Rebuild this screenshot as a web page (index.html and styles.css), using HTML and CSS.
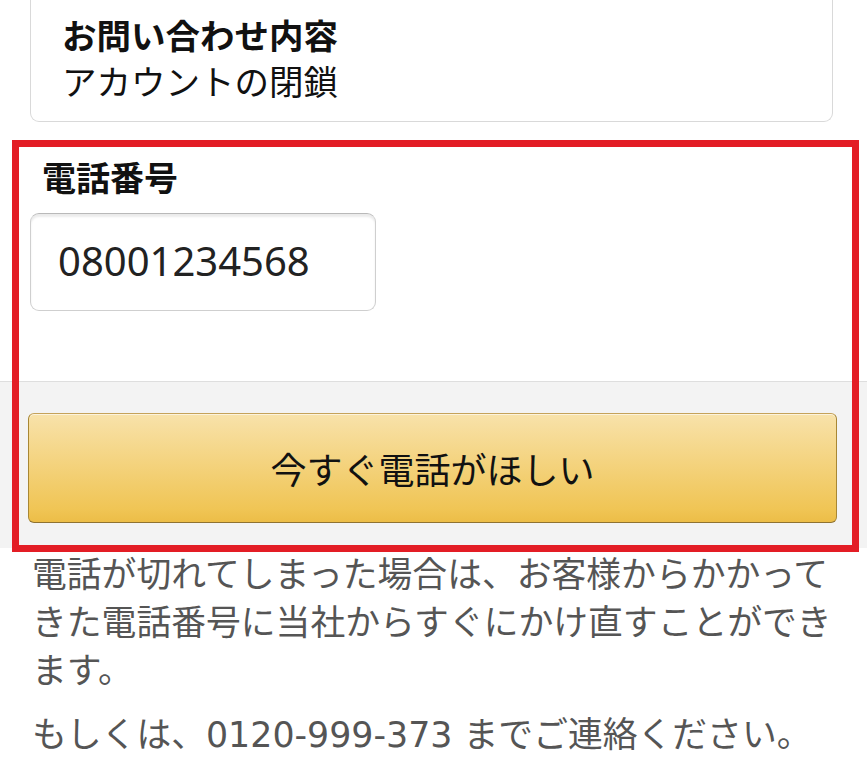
FILE: index.html
```html
<html>

<head>
    <meta charset="utf-8">
    <title>電話番号</title>
    <link rel="stylesheet" href="styles.css">
</head>

<body>
    <div class="page">
        <div class="summary">
            <div class="summary-title">お問い合わせ内容</div>
            <div class="summary-value">アカウントの閉鎖</div>
        </div>

        <div class="phone">
            <label class="phone-label" for="phoneNumber">電話番号</label>
            <input class="phone-input" id="phoneNumber" type="tel" value="08001234568">
        </div>

        <div class="actions">
            <button class="call-button">今すぐ電話がほしい</button>
        </div>

        <div class="notes">
            <p>電話が切れてしまった場合は、お客様からかかってきた電話番号に当社からすぐにかけ直すことができます。</p>
            <p>もしくは、0120-999-373 までご連絡ください。</p>
        </div>

        <!-- annotation frame drawn over the phone form -->
        <div class="highlight"></div>
    </div>
</body>

</html>
```

FILE: styles.css
```css
body {
    margin: 0;
    background: #fff;
    font-family: "Noto Sans CJK JP", "Noto Sans", sans-serif;
    color: #111;
}

.page {
    position: relative;
    width: 867px;
    height: 767px;
    overflow: hidden;
}

.summary {
    margin: 0 34px 0 30px;
    padding: 11px 31px 18px;
    border: 1px solid #d9d9d9;
    border-top: 0;
    border-radius: 0 0 9px 9px;
    font-size: 34.5px;
    line-height: 46px;
}

.summary-title {
    font-weight: bold;
}

.phone {
    display: flex;
    flex-direction: column;
    align-items: flex-start;
    padding: 32px 30px 70px;
    border-bottom: 1px solid #dedede;
}

.phone-label {
    margin-left: 12px;
    font-size: 34px;
    line-height: 46px;
    font-weight: bold;
}

.phone-input {
    box-sizing: border-box;
    width: 346px;
    height: 98px;
    margin-top: 13px;
    padding: 0 0 4px 27px;
    border: 1px solid #cfcfcf;
    border-top-color: #b9b9b9;
    border-radius: 9px;
    box-shadow: inset 0 3px 2px rgba(0, 0, 0, .08);
    font-family: "Noto Sans", sans-serif;
    font-size: 40px;
    color: #222;
    background: #fff;
}

.actions {
    padding: 31px 30px 25px 28px;
    background: #f3f3f3;
}

.call-button {
    display: block;
    width: 100%;
    height: 110px;
    padding: 0;
    border: 1px solid #a88734;
    border-color: #c5a25a #a88734 #8f7230;
    border-radius: 6px;
    background: linear-gradient(to bottom, #f8e2aa, #f0c555 88%, #ecbd47);
    box-shadow: inset 0 1px 0 rgba(255, 255, 255, .6);
    font-family: "Noto Sans CJK JP", sans-serif;
    font-size: 36px;
    color: #111;
    cursor: pointer;
}

.notes {
    padding: 3px 30px 0 32px;
    font-family: "DejaVu Sans", "Noto Sans CJK JP", sans-serif;
    font-size: 34.8px;
    line-height: 48px;
    color: #555;
}

.notes p {
    margin: 0 0 16px;
}

.highlight {
    position: absolute;
    left: 12px;
    top: 140px;
    width: 833px;
    height: 398px;
    border: 7px solid #e31d25;
}
```
